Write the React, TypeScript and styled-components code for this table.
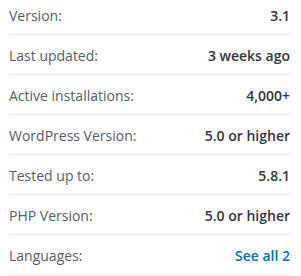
import React from 'react';
import styled, { createGlobalStyle } from 'styled-components';

const GlobalStyle = createGlobalStyle`
  body {
    margin: 0;
    background: #fff;
    font-family: 'Open Sans', 'Liberation Sans', sans-serif;
    overflow: hidden;
  }
`;

interface MetaItem {
  label: string;
  value: string;
  link?: boolean;
}

const items: MetaItem[] = [
  { label: 'Version:', value: '3.1' },
  { label: 'Last updated:', value: '3 weeks ago' },
  { label: 'Active installations:', value: '4,000+' },
  { label: 'WordPress Version:', value: '5.0 or higher' },
  { label: 'Tested up to:', value: '5.8.1' },
  { label: 'PHP Version:', value: '5.0 or higher' },
  { label: 'Languages:', value: 'See all 2', link: true },
];

const App = () => {
  return (
    <>
      <GlobalStyle />
      <MetaList>
        {items.map((item) => (
          <MetaRow key={item.label}>
            <Label>{item.label}</Label>
            {item.link ? <ValueLink href="#">{item.value}</ValueLink> : <Value>{item.value}</Value>}
          </MetaRow>
        ))}
      </MetaList>
    </>
  );
};

const MetaList = styled.ul`
  list-style: none;
  margin: -5px 0 0;
  padding: 0 10px 0 9px;
`;

const MetaRow = styled.li`
  display: flex;
  justify-content: space-between;
  align-items: center;
  height: 39px;
  border-bottom: 1px solid #eeeeee;
  font-size: 14px;
  padding-top: 1px;
  box-sizing: content-box;
  height: 38px;
`;

const Label = styled.span`
  color: #555d66;
`;

const Value = styled.strong`
  color: #32373c;
  font-weight: 600;
  padding-right: 1px;
`;

const ValueLink = styled.a`
  color: #0073aa;
  font-weight: 600;
  text-decoration: none;
  padding-right: 1px;
`;

export default App;
